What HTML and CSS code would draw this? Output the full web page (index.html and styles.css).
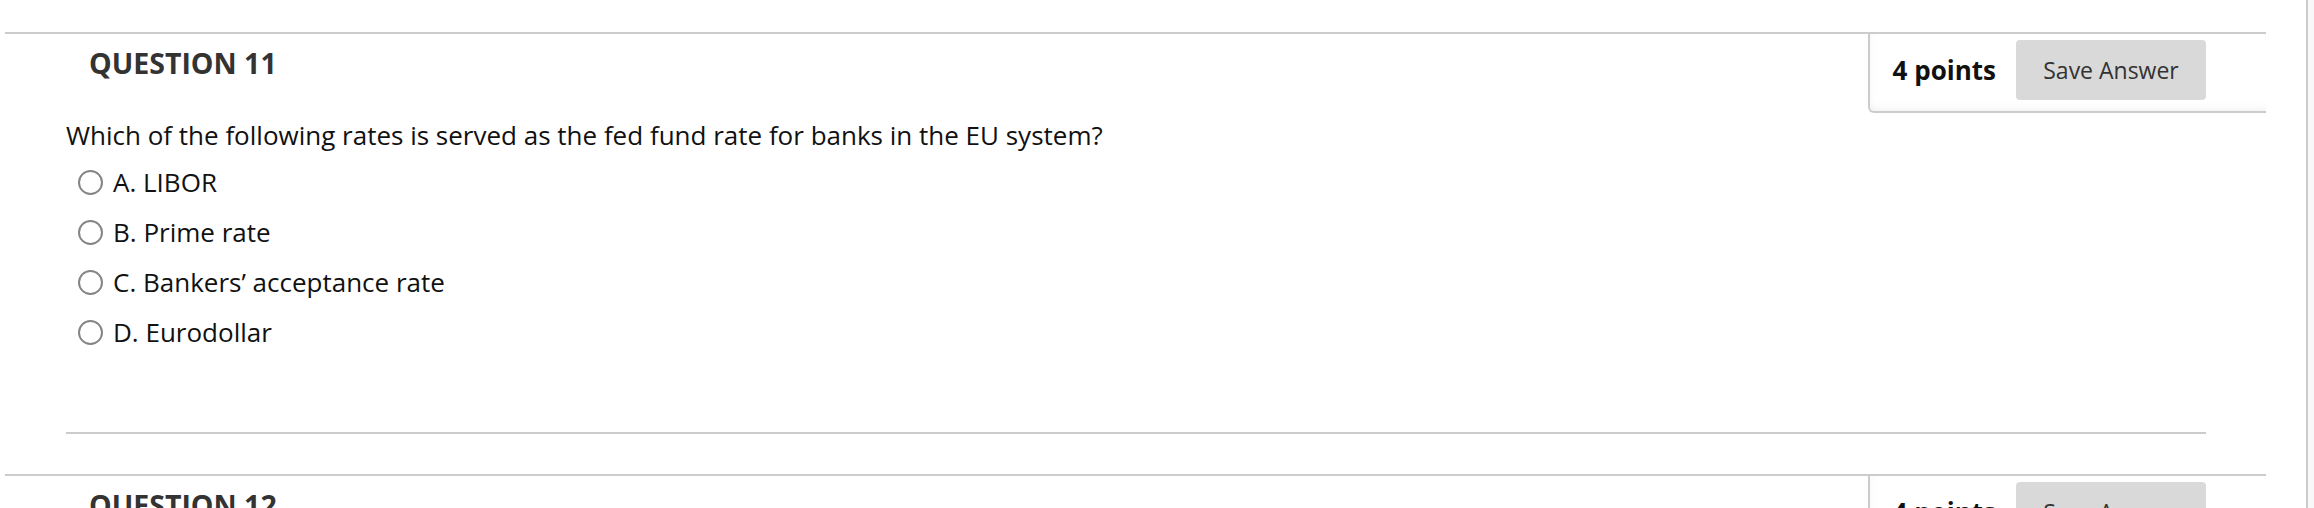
FILE: index.html
```html
<!DOCTYPE html>
<html lang="en">
<head>
<meta charset="utf-8">
<title>Quiz</title>
<link rel="stylesheet" href="styles.css">
</head>
<body>
<div class="page">
  <main class="quiz">
    <section class="question">
      <header class="q-head">
        <h3 class="q-title">QUESTION 11</h3>
        <div class="q-points">
          <span class="pts">4 points</span>
          <button class="save" type="button">Save Answer</button>
        </div>
      </header>
      <div class="q-body">
        <p class="q-text">Which of the following rates is served as the fed fund rate for banks in the EU system?</p>
        <ul class="options">
          <li class="option"><span class="radio"></span><span class="opt-text">A. LIBOR</span></li>
          <li class="option"><span class="radio"></span><span class="opt-text">B. Prime rate</span></li>
          <li class="option"><span class="radio"></span><span class="opt-text">C. Bankers’ acceptance rate</span></li>
          <li class="option"><span class="radio"></span><span class="opt-text">D. Eurodollar</span></li>
        </ul>
      </div>
    </section>
    <section class="question">
      <header class="q-head">
        <h3 class="q-title">QUESTION 12</h3>
        <div class="q-points">
          <span class="pts">4 points</span>
          <button class="save" type="button">Save Answer</button>
        </div>
      </header>
    </section>
  </main>
  <div class="scroll"></div>
</div>
</body>
</html>
```
FILE: styles.css
```css
html, body {
  margin: 0;
  padding: 0;
  background: #fff;
  height: 100%;
  overflow: hidden;
}
body {
  font-family: "Open Sans", "Liberation Sans", sans-serif;
  color: #111;
}
.page {
  display: flex;
  height: 508px;
  overflow: hidden;
}
.quiz {
  flex: 1;
  padding: 32px 40px 0 5px;
  min-width: 0;
}
.scroll {
  width: 6px;
  border-left: 2px solid #cccccc;
  background: #f8f8f8;
}
.question {
  border-top: 2px solid #cccccc;
  margin-bottom: 40px;
}
.q-head {
  display: flex;
  justify-content: space-between;
  align-items: flex-start;
}
.q-title {
  margin: 10px 0 0 84px;
  font-size: 28.5px;
  line-height: 38px;
  font-weight: 700;
  color: #333;
}
.q-points {
  display: flex;
  align-items: center;
  gap: 20px;
  padding: 6px 60px 11px 23px;
  border-left: 2px solid #cccccc;
  border-bottom: 2px solid #cccccc;
  border-bottom-left-radius: 6px;
  box-shadow: inset 0 -8px 10px -6px rgba(0, 0, 0, 0.05), inset 6px 0 8px -6px rgba(0, 0, 0, 0.04);
}
.pts {
  font-size: 26px;
  font-weight: 700;
  color: #111;
}
.save {
  width: 190px;
  height: 60px;
  border: none;
  border-radius: 4px;
  background: #d9d9d9;
  color: #333;
  font-family: "Open Sans", "Liberation Sans", sans-serif;
  font-size: 23px;
  padding: 0;
}
.q-body {
  margin: 5px 60px 0 61px;
  padding-bottom: 75px;
  border-bottom: 2px solid #cccccc;
}
.q-text {
  margin: 0 0 5px;
  font-size: 26px;
  line-height: 34px;
}
.options {
  list-style: none;
  margin: 0;
  padding: 0;
}
.option {
  display: flex;
  align-items: center;
  height: 50px;
  padding-left: 12px;
  font-size: 26px;
}
.radio {
  width: 21px;
  height: 21px;
  border: 2px solid #858585;
  border-radius: 50%;
  margin-right: 10px;
  flex: none;
}
```
